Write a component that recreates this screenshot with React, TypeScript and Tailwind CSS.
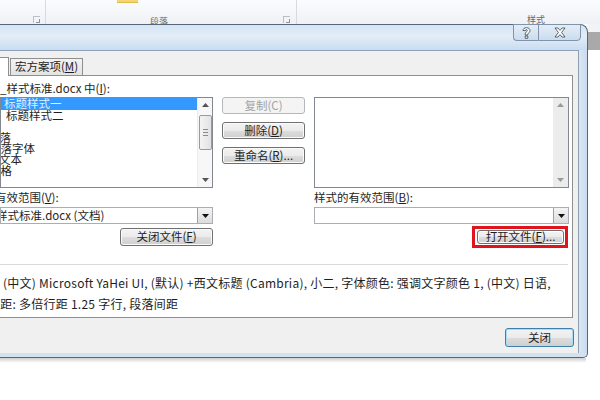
import React from 'react';
import clsx from 'clsx';

const btnFace =
  'border-[#707070] bg-[linear-gradient(180deg,#f3f3f3_0%,#ebebeb_50%,#dddddd_52%,#cfcfcf_100%)] shadow-[inset_0_0_0_1px_#fbfbfb]';

interface BtnProps {
  children: React.ReactNode;
  className?: string;
  disabled?: boolean;
  primary?: boolean;
}

const WinButton = ({ children, className, disabled, primary }: BtnProps) => (
  <div
    className={clsx(
      'flex items-center justify-center rounded-[3px] border text-[11.5px] leading-none whitespace-nowrap',
      disabled && 'border-[#b4b8bb] bg-[#f4f4f4] text-[#a3a3a3]',
      !disabled && !primary && btnFace,
      primary &&
        'border-[#3c7fb1] bg-[linear-gradient(180deg,#f3f3f3_0%,#ebebeb_50%,#dddddd_52%,#cfcfcf_100%)] shadow-[inset_0_0_0_1px_#a9dcf6]',
      className
    )}
  >
    {children}
  </div>
);

const Arrow = ({ up = false, color = '#444' }: { up?: boolean; color?: string }) => (
  <svg width="7" height="4" viewBox="0 0 7 4">
    <path d={up ? 'M0 4 L3.5 0 L7 4 Z' : 'M0 0 L7 0 L3.5 4 Z'} fill={color} />
  </svg>
);

const Launcher = () => (
  <div className="w-[7px] h-[7px] border-l border-t border-[#b9c0c8] relative">
    <div className="absolute right-0 bottom-0 w-[4px] h-[4px] border-r border-b border-[#8d96a0]" />
  </div>
);

const Combo = ({ text }: { text?: React.ReactNode }) => (
  <div className="h-[17px] border border-[#abadb3] bg-white flex items-stretch">
    <div className="flex-1 overflow-hidden flex items-center text-[11.5px] leading-none whitespace-nowrap">{text}</div>
    <div className="w-[15px] border-l border-[#a0a0a0] bg-[linear-gradient(180deg,#f4f4f4,#dcdcdc)] flex items-center justify-center">
      <Arrow color="#111" />
    </div>
  </div>
);

const Ribbon = () => (
  <div className="h-[24px] flex overflow-hidden bg-[linear-gradient(180deg,#fcfcfd,#eef1f5)]">
    <div className="w-[46px] border-r border-[#d6dbe1] flex items-end justify-end pr-[5px] pb-[1px]">
      <Launcher />
    </div>
    <div className="w-[251px] border-r border-[#d6dbe1] flex flex-col justify-between">
      <div className="ml-[71px] w-[21px] h-[3px] bg-[#f3d572] border-b border-[#e0b94a]" />
      <div className="flex items-end justify-between pl-[104px] pr-[6px] pb-[1px]">
        <span className="text-[9px] leading-[10px] mb-[-4px] text-[#6a6a6a]">段落</span>
        <Launcher />
      </div>
    </div>
    <div className="flex-1 flex items-end pl-[230px]">
      <span className="text-[9px] leading-[10px] mb-[-1px] text-[#6a6a6a]">样式</span>
    </div>
  </div>
);

const leftItems: { text: string; ml: number; h: number }[] = [
  { text: '标题样式二', ml: 5, h: 12 },
  { text: '', ml: 0, h: 11 },
  { text: '段落', ml: -13, h: 10 },
  { text: '默认段落字体', ml: -35, h: 11 },
  { text: '正文文本', ml: -25, h: 11 },
  { text: '表格', ml: -12, h: 11 },
];

const LeftList = () => (
  <div className="h-[91px] border border-[#828790] bg-white flex overflow-hidden">
    <div className="flex-1 overflow-hidden flex flex-col">
      <div className="h-[12px] bg-[#3399ff] text-[#dff0ff] flex items-center overflow-hidden whitespace-nowrap text-[11.5px] leading-none">
        <span className="ml-[3px]">标题样式一</span>
      </div>
      {leftItems.map((it, i) => (
        <div
          key={i}
          className="flex items-center whitespace-nowrap text-[11.5px] leading-none"
          style={{ height: it.h }}
        >
          <span style={{ marginLeft: it.ml }}>{it.text}</span>
        </div>
      ))}
    </div>
    <div className="w-[15px] bg-[#f7f7f7] border-l border-[#ececec] flex flex-col items-center">
      <div className="h-[14px] flex items-center">
        <Arrow up color="#555" />
      </div>
      <div className="mt-[3px] w-[13px] h-[35px] rounded-[2px] border border-[#9a9a9a] bg-[linear-gradient(90deg,#f4f4f4,#e2e2e2)] flex flex-col items-center justify-center gap-[2px]">
        <div className="w-[5px] h-px bg-[#8a8a8a]" />
        <div className="w-[5px] h-px bg-[#8a8a8a]" />
        <div className="w-[5px] h-px bg-[#8a8a8a]" />
      </div>
      <div className="flex-1" />
      <div className="h-[14px] flex items-center">
        <Arrow color="#555" />
      </div>
    </div>
  </div>
);

const RightList = () => (
  <div className="h-[91px] border border-[#828790] bg-white flex">
    <div className="flex-1" />
    <div className="w-[15px] bg-[#ececec] flex flex-col items-center justify-between">
      <div className="h-[14px] flex items-center">
        <Arrow up color="#9a9a9a" />
      </div>
      <div className="h-[14px] flex items-center">
        <Arrow color="#9a9a9a" />
      </div>
    </div>
  </div>
);

const TitleButtons = () => (
  <div className="flex mt-[-1px] mr-[6px] h-[17px]">
    <div className="w-[25px] border border-r-0 border-[#7f93aa] rounded-bl-[4px] bg-[linear-gradient(180deg,#e4edf7,#cbdcee)] flex items-center justify-center">
      <svg width="9" height="12" viewBox="0 0 9 12">
        <path
          d="M1 3.5 C1 1.5 2.6 0.7 4.5 0.7 C6.5 0.7 8 1.8 8 3.6 C8 5.3 6.2 5.8 5.8 7.2 L5.8 8 L3.2 8 L3.2 6.8 C3.4 5 5.3 4.8 5.3 3.6 C5.3 2.9 4.9 2.5 4.4 2.5 C3.8 2.5 3.5 3 3.5 3.7 Z M3.2 9 L5.8 9 L5.8 11.3 L3.2 11.3 Z"
          fill="#fff"
          stroke="#38414c"
          strokeWidth="0.8"
        />
      </svg>
    </div>
    <div className="w-[43px] border border-[#7f93aa] rounded-br-[4px] bg-[linear-gradient(180deg,#e4edf7,#cbdcee)] flex items-center justify-center">
      <svg width="12" height="11" viewBox="0 0 12 11">
        <path
          d="M1 1 L4 1 L6 3.3 L8 1 L11 1 L7.6 5.5 L11 10 L8 10 L6 7.7 L4 10 L1 10 L4.4 5.5 Z"
          fill="#fff"
          stroke="#38414c"
          strokeWidth="0.8"
        />
      </svg>
    </div>
  </div>
);

const u = (c: string) => <span className="underline">{c}</span>;

const Panel = () => (
  <div className="h-[243px] mr-[5px] bg-white border border-l-0 border-[#8e8f8f] flex flex-col">
    <div className="flex pt-[6px]">
      <div className="w-[213px] flex flex-col">
        <div className="h-[14px] flex items-center text-[11.5px] leading-none whitespace-nowrap">
          <span>_样式标准.docx 中({u('I')}):</span>
        </div>
        <div className="mt-px">
          <LeftList />
        </div>
        <div className="mt-[3px] h-[14px] flex items-center text-[11.5px] leading-none whitespace-nowrap overflow-hidden">
          <span className="ml-[-5px]">有效范围({u('V')}):</span>
        </div>
        <div className="mt-[2px]">
          <Combo text={<span className="ml-[-5px]">样式标准.docx (文档)</span>} />
        </div>
        <div className="mt-[4px] flex justify-end">
          <WinButton className="w-[93px] h-[18px]">关闭文件({u('F')})</WinButton>
        </div>
      </div>
      <div className="ml-[9px] w-[83px] flex flex-col pt-[15px] gap-[8px]">
        <WinButton disabled className="h-[17px]">
          复制(C)
        </WinButton>
        <WinButton className="h-[17px]">删除({u('D')})</WinButton>
        <WinButton className="h-[17px]">重命名({u('R')})...</WinButton>
      </div>
      <div className="ml-[9px] w-[255px] flex flex-col">
        <div className="h-[14px]" />
        <div className="mt-px">
          <RightList />
        </div>
        <div className="mt-[3px] h-[14px] flex items-center text-[11.5px] leading-none whitespace-nowrap">
          <span>样式的有效范围({u('B')}):</span>
        </div>
        <div className="mt-[2px]">
          <Combo />
        </div>
        <div className="mt-[2px] flex justify-end pr-[1px]">
          <div className="border-[3px] border-[#e0141c] p-px pl-[2px]">
            <WinButton className="w-[87px] h-[14px]">打开文件({u('F')})...</WinButton>
          </div>
        </div>
      </div>
    </div>
    <div className="mt-[16px] mr-[4px] h-px bg-[#dadada]" />
    <div className="mt-[7px] flex flex-col text-[12px] tracking-[0.25px] leading-[21px] whitespace-nowrap overflow-hidden">
      <span className="ml-[3px]">
        (中文) Microsoft YaHei UI, (默认) +西文标题 (Cambria), 小二, 字体颜色: 强调文字颜色 1, (中文) 日语,
      </span>
      <span className="ml-[-12px]">行距: 多倍行距 1.25 字行, 段落间距</span>
    </div>
  </div>
);

const Dialog = () => (
  <div className="w-[588px] flex flex-col">
    <div className="h-[26px] rounded-tr-[8px] border-t border-r border-[#59667a] bg-[linear-gradient(180deg,#d5e4f4_0%,#e3edf8_45%,#c9dcf0_100%)] flex justify-end">
      <TitleButtons />
    </div>
    <div className="flex">
      <div className="w-[579px] bg-[#f0f0f0] border-t border-r border-[#8ea1b6] flex flex-col">
        <div className="h-[24px] flex items-end">
          <div className="w-[9px] h-[19px] bg-white border-r border-t border-[#8e8f8f] mb-[-1px] relative z-10" />
          <div className="ml-px w-[73px] h-[17px] border border-b-0 border-[#8e8f8f] bg-[linear-gradient(180deg,#f3f3f3,#e3e3e3)] flex items-center justify-center text-[11.5px] leading-none">
            宏方案项({u('M')})
          </div>
        </div>
        <Panel />
        <div className="h-[35px] flex justify-end items-start pt-[10px] pr-[4px]">
          <WinButton primary className="w-[69px] h-[19px]">
            关闭
          </WinButton>
        </div>
      </div>
      <div className="w-[9px] bg-[linear-gradient(90deg,#dbe7f3,#c9dbee)] border-r border-[#59667a]" />
    </div>
    <div className="h-[5px] rounded-br-[6px] border-b border-r border-[#59667a] bg-[#d3e2f1]" />
    <div className="h-[5px] mr-[2px] bg-[linear-gradient(180deg,#cfcfcf,#ffffff)]" />
  </div>
);

export default function App() {
  return (
    <div className="w-[600px] h-[400px] overflow-hidden bg-white text-[#1e1e1e] font-['Noto_Sans_CJK_SC','Liberation_Sans',sans-serif]">
      <Ribbon />
      <div className="flex">
        <Dialog />
        <div className="flex-1 flex flex-col">
          <div className="h-[8px] bg-[#f2f3f5]" />
          <div className="h-[18px] bg-[#a9a9a9]" />
          <div className="flex-1 bg-white" />
        </div>
      </div>
    </div>
  );
}
